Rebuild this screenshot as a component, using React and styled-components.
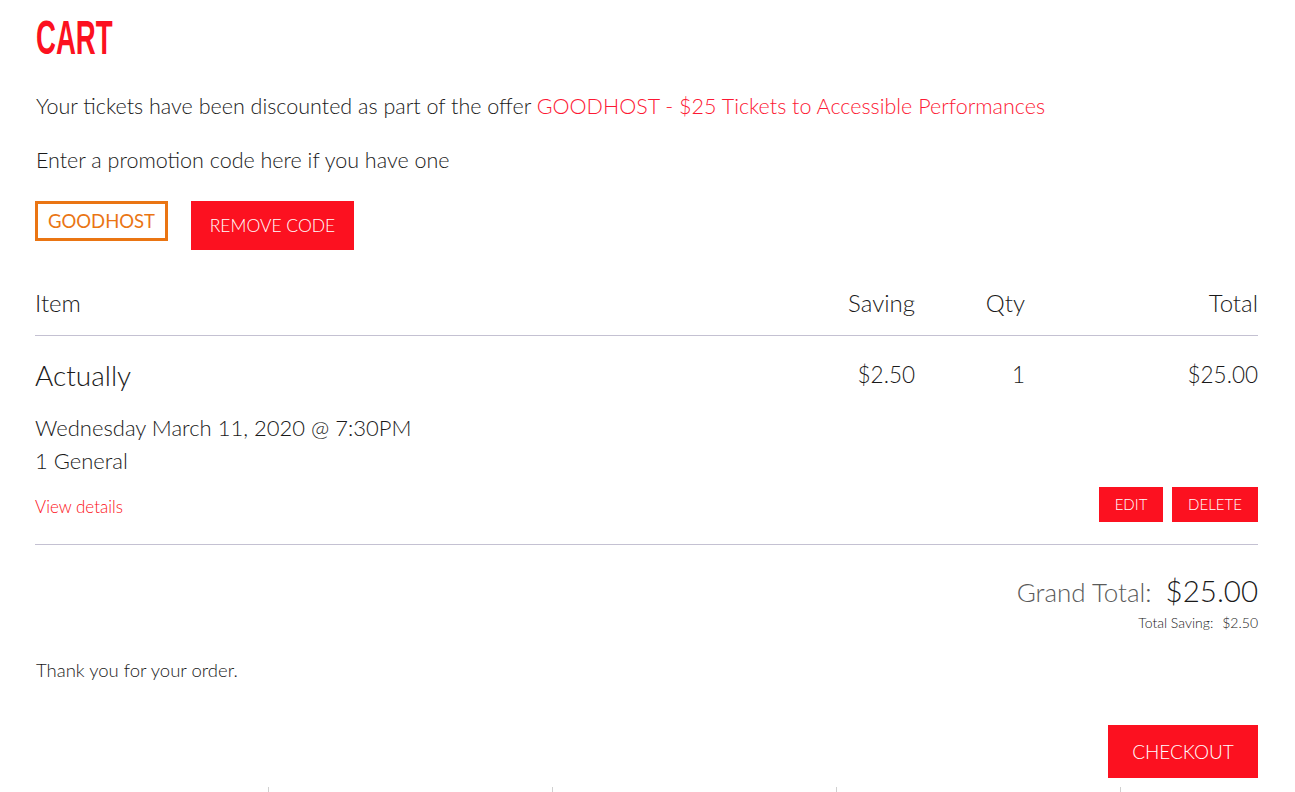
import React from "react";
import styled, { createGlobalStyle } from "styled-components";

const RED = "#fc1120";

const GlobalStyle = createGlobalStyle`
  body {
    margin: 0;
    background: #fff;
    font-family: Lato, "Open Sans", sans-serif;
    font-weight: 300;
    color: #1a1a1a;
  }
`;

const Page = styled.div`
  padding: 0 37px 0 35px;
`;

const Title = styled.h1`
  margin: 0;
  padding-top: 14px;
  height: 48px;
  font-family: "Liberation Sans Narrow", "Liberation Sans", sans-serif;
  font-weight: 700;
  font-size: 48px;
  line-height: 48px;
  color: ${RED};
  transform: scaleX(0.575);
  transform-origin: left;
  margin-left: 1px;
`;

const Text = styled.p`
  margin: ${(p) => p.$mt || 0}px 0 0 1px;
  font-size: ${(p) => p.$size || 21.5}px;
  line-height: 1.2;
`;

const Offer = styled.span`
  color: #fd1834;
`;

const PromoRow = styled.div`
  display: flex;
  align-items: flex-start;
  gap: 23px;
  margin-top: 27px;
`;

const CodeInput = styled.div`
  box-sizing: border-box;
  width: 133px;
  height: 40px;
  border: 3px solid #ea7513;
  color: #ea7513;
  font-size: 18.5px;
  font-weight: 400;
  display: flex;
  align-items: center;
  justify-content: center;
`;

const Button = styled.button`
  box-sizing: border-box;
  border: none;
  background: ${RED};
  color: #fff;
  font-family: Lato, sans-serif;
  font-weight: 300;
  text-transform: uppercase;
  padding: 0;
  width: ${(p) => p.$w}px;
  height: ${(p) => p.$h}px;
  font-size: ${(p) => p.$fs}px;
  cursor: pointer;
`;

const Row = styled.div`
  display: grid;
  grid-template-columns: 770px 110px 110px 233px;
  align-items: center;
`;

const Cell = styled.div`
  text-align: ${(p) => (p.$right ? "right" : "left")};
`;

const HeaderRow = styled(Row)`
  box-sizing: border-box;
  height: 86px;
  align-items: end;
  padding-bottom: 18px;
  font-size: 24px;
  border-bottom: 1px solid #c4c1d2;
`;

const ItemBlock = styled.div`
  border-bottom: 1px solid #c4c1d2;
  padding: 22px 0 22px;
`;

const ItemName = styled.div`
  font-size: 28px;
  line-height: 34px;
`;

const ItemValue = styled(Cell)`
  font-size: 22.5px;
`;

const Detail = styled.div`
  font-size: 22px;
  line-height: 33px;
`;

const Details = styled.div`
  margin-top: 19px;
`;

const ActionRow = styled.div`
  display: flex;
  align-items: flex-end;
  justify-content: space-between;
  margin-top: 10px;
`;

const ViewLink = styled.a`
  color: ${RED};
  font-size: 17px;
  line-height: 20px;
  margin-bottom: 5px;
  text-decoration: none;
`;

const Actions = styled.div`
  display: flex;
  gap: 9px;
`;

const Summary = styled.div`
  display: flex;
  flex-direction: column;
  align-items: flex-end;
  margin-top: 28px;
`;

const Grand = styled.div`
  display: flex;
  align-items: baseline;
  gap: 14px;
  line-height: 35px;
`;

const GrandLabel = styled.span`
  font-size: 26px;
  color: #5a5a5a;
`;

const GrandValue = styled.span`
  font-size: 29.5px;
`;

const Saving = styled.div`
  font-size: 14px;
  line-height: 16px;
  margin-top: 5px;
`;

const SavingValue = styled.span`
  margin-left: 9px;
`;

const CheckoutRow = styled.div`
  display: flex;
  justify-content: flex-end;
  margin-top: 44px;
`;

const Footer = styled.div`
  display: grid;
  grid-template-columns: repeat(4, 284px);
  margin: 9px 0 0 -50px;
`;

const FooterCol = styled.div`
  height: 40px;
  border-right: 1px solid #d0d0d0;
`;

export default function App() {
  return (
    <>
      <GlobalStyle />
      <Page>
        <Title>CART</Title>
        <Text $mt={32}>
          Your tickets have been discounted as part of the offer{" "}
          <Offer>GOODHOST - $25 Tickets to Accessible Performances</Offer>
        </Text>
        <Text $mt={28}>Enter a promotion code here if you have one</Text>
        <PromoRow>
          <CodeInput>GOODHOST</CodeInput>
          <Button $w={163} $h={49} $fs={17.5}>Remove code</Button>
        </PromoRow>
        <HeaderRow>
          <Cell>Item</Cell>
          <Cell $right>Saving</Cell>
          <Cell $right>Qty</Cell>
          <Cell $right>Total</Cell>
        </HeaderRow>
        <ItemBlock>
          <Row>
            <ItemName>Actually</ItemName>
            <ItemValue $right>$2.50</ItemValue>
            <ItemValue $right>1</ItemValue>
            <ItemValue $right>$25.00</ItemValue>
          </Row>
          <Details>
            <Detail>Wednesday March 11, 2020 @ 7:30PM</Detail>
            <Detail>1 General</Detail>
          </Details>
          <ActionRow>
            <ViewLink href="#">View details</ViewLink>
            <Actions>
              <Button $w={64} $h={35} $fs={15}>Edit</Button>
              <Button $w={86} $h={35} $fs={15}>Delete</Button>
            </Actions>
          </ActionRow>
        </ItemBlock>
        <Summary>
          <Grand>
            <GrandLabel>Grand Total:</GrandLabel>
            <GrandValue>$25.00</GrandValue>
          </Grand>
          <Saving>
            Total Saving:<SavingValue>$2.50</SavingValue>
          </Saving>
        </Summary>
        <Text $mt={28} $size={18.5}>Thank you for your order.</Text>
        <CheckoutRow>
          <Button $w={150} $h={53} $fs={19}>Checkout</Button>
        </CheckoutRow>
        <Footer>
          <FooterCol />
          <FooterCol />
          <FooterCol />
          <FooterCol />
        </Footer>
      </Page>
    </>
  );
}
